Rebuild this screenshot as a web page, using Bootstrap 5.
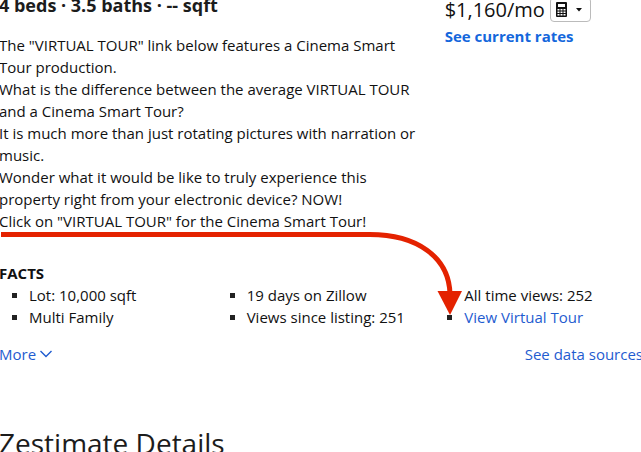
<!DOCTYPE html>
<html lang="en">
<head>
<meta charset="utf-8">
<meta name="viewport" content="width=device-width, initial-scale=1">
<title>Listing details</title>
<link href="https://cdn.jsdelivr.net/npm/bootstrap@5.3.0/dist/css/bootstrap.min.css" rel="stylesheet">
<style>
body { font-family: "Open Sans", "Noto Sans", sans-serif; font-size: 15px; line-height: 22px; color: #111; background: #fff; overflow: hidden; }
main { margin: 0 -2px 0 -1px; }
a, .more-btn { color: #1f5cd0; text-decoration: none; }
.summary { flex: 0 0 69.2%; padding-right: 24px; }
.home-size { font-size: 18px; line-height: 24px; margin: -7px 0 17px; color: #1c1c1c; }
.payment { font-size: 20px; line-height: 24px; margin-top: -3px; }
.calc-btn { border: 1px solid #bbb; border-radius: 4px; background: #fff; height: 25px; width: 41px; padding: 0 8px 0 5px; margin-left: 5px; }
.rates { font-weight: 700; color: #1467dc; margin-top: 3px; }
.facts-block { margin-top: 30px; }
.facts-title { font-size: 15px; line-height: 22px; }
.fact-list { list-style: none; flex: 0 0 33.8%; }
.fact-list li { display: flex; align-items: center; white-space: nowrap; }
.fact-list li::before { content: ""; width: 5px; height: 5px; background: #222; margin: 1px 12px 0 13px; flex: none; }
.link-row { margin-top: 15px; }
.details-title { font-size: 28px; line-height: 36px; font-weight: 400; margin-top: 60px; color: #1c1c1c; }
.callout-arrow { left: 0; top: 228px; z-index: 1; pointer-events: none; }
</style>
<script src="https://cdn.jsdelivr.net/npm/bootstrap@5.3.0/dist/js/bootstrap.bundle.min.js"></script>
</head>
<body>
<main class="position-relative">
  <div class="d-flex align-items-start">
    <section class="summary">
      <h2 class="home-size fw-bold">4 beds · 3.5 baths · -- sqft</h2>
      <p class="mb-0">The "VIRTUAL TOUR" link below features a Cinema Smart Tour production.</p>
      <p class="mb-0">What is the difference between the average VIRTUAL TOUR and a Cinema Smart Tour?</p>
      <p class="mb-0">It is much more than just rotating pictures with narration or music.</p>
      <p class="mb-0">Wonder what it would be like to truly experience this property right from your electronic device? NOW!</p>
      <p class="mb-0">Click on "VIRTUAL TOUR" for the Cinema Smart Tour!</p>
    </section>
    <aside class="flex-grow-1 text-nowrap">
      <div class="payment d-flex align-items-center">
        <span>$1,160/mo</span>
        <button type="button" class="calc-btn d-flex align-items-center justify-content-between" aria-label="Payment calculator">
          <svg width="11" height="15" viewBox="0 0 11 15" aria-hidden="true">
            <rect x="0" y="0" width="11" height="15" rx="1" fill="#111"/>
            <path fill="#fff" d="M2 2h7v3H2zM1.500 7h2v1.500h-2zM4.500 7h2v1.500h-2zM7.500 7h2v1.500h-2zM1.500 9.500h2V11h-2zM4.500 9.500h2V11h-2zM7.500 9.500h2V11h-2zM1.500 12h2v1.500h-2zM4.500 12h2v1.500h-2zM7.500 12h2v1.500h-2z"/>
          </svg>
          <svg width="6" height="4" viewBox="0 0 6 4" aria-hidden="true"><path d="M0 0h6L3 3.500z" fill="#111"/></svg>
        </button>
      </div>
      <a class="rates d-inline-block" href="#rates">See current rates</a>
    </aside>
  </div>

  <section class="facts-block">
    <h3 class="facts-title fw-bold mb-0">FACTS</h3>
    <div class="d-flex">
      <ul class="fact-list p-0 m-0"><li>Lot: 10,000 sqft</li><li>Multi Family</li></ul>
      <ul class="fact-list p-0 m-0"><li>19 days on Zillow</li><li>Views since listing: 251</li></ul>
      <ul class="fact-list p-0 m-0"><li>All time views: 252</li><li><a href="#tour">View Virtual Tour</a></li></ul>
    </div>
    <div class="link-row d-flex justify-content-between">
      <button type="button" class="more-btn border-0 bg-transparent p-0 d-flex align-items-center gap-1">More
        <svg width="12" height="8" viewBox="0 0 12 8" aria-hidden="true"><path d="M.5 1 6 6.500 11.500 1" fill="none" stroke="#1f5cd0" stroke-width="1.400"/></svg>
      </button>
      <a href="#sources">See data sources</a>
    </div>
  </section>

  <h2 class="details-title mb-0">Zestimate Details</h2>

  <svg class="callout-arrow position-absolute" width="470" height="90" viewBox="-1 228 470 90" aria-hidden="true">
    <path d="M1 234.500H368C417 234 449 257 450 294" fill="none" stroke="#e42200" stroke-width="5"/>
    <path d="M437.500 291H462L450 315z" fill="#e42200"/>
  </svg>
</main>
</body>
</html>
